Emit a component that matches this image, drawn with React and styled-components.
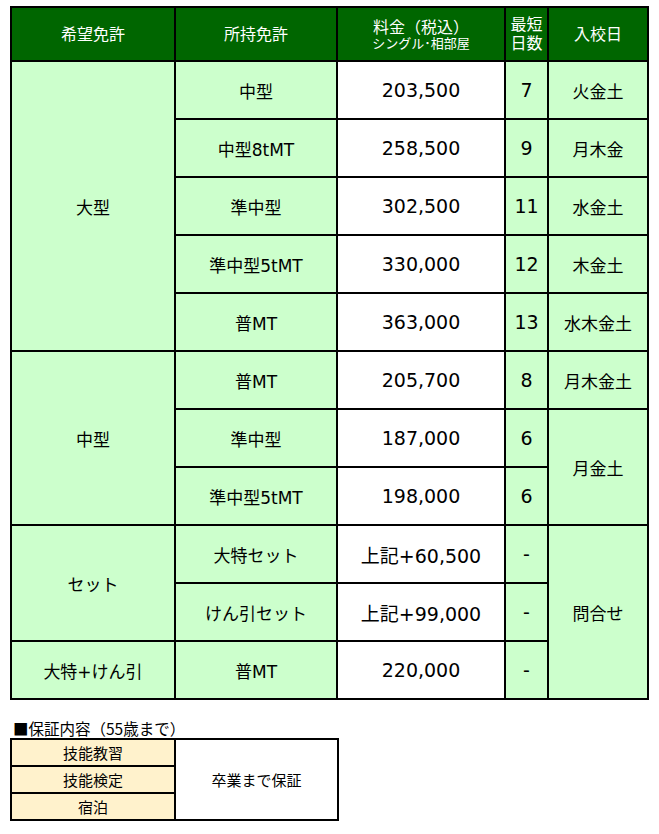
import React from 'react';
import styled, { createGlobalStyle } from 'styled-components';

const GlobalStyle = createGlobalStyle`
  html, body {
    margin: 0;
    padding: 0;
    background: #fff;
  }
  body {
    font-family: "DejaVu Sans", "Noto Sans CJK JP", sans-serif;
    color: #000;
  }
`;

const Page = styled.div`
  padding: 6px 0 0 10px;
  width: 640px;
`;

const PriceTable = styled.table`
  border-collapse: collapse;
  table-layout: fixed;
  width: 637px;
`;

const HeadCell = styled.th`
  background: #006600;
  color: #fff;
  font-weight: normal;
  font-size: 16px;
  line-height: 19px;
  height: 52px;
  padding: 0;
  border: 2px solid #000;
  text-align: center;
  vertical-align: middle;
`;

const SubHead = styled.span`
  display: block;
  font-size: 13px;
  line-height: 14px;
`;

const Row = styled.tr`
  height: 58px;
`;

const Cell = styled.td`
  background: ${({ $white }) => ($white ? '#fff' : '#ccffcc')};
  font-size: ${({ $num }) => ($num ? '19px' : '17px')};
  padding: 0;
  border: 2px solid #000;
  text-align: center;
  vertical-align: middle;
`;

const Note = styled.div`
  margin-top: 19px;
  padding-left: 3px;
  font-size: 15.5px;
  line-height: 19px;
  font-family: "Noto Sans CJK JP", sans-serif;
`;

const GuaranteeTable = styled.table`
  border-collapse: collapse;
  table-layout: fixed;
  width: 327px;
`;

const GCell = styled.td`
  background: ${({ $yellow }) => ($yellow ? '#fff2cc' : '#fff')};
  border: 2px solid #000;
  font-size: 15px;
  height: 25px;
  padding: 0;
  text-align: center;
  vertical-align: middle;
`;

const rows = [
  { want: '大型', span: 5, have: '中型', price: '203,500', days: '7', entry: '火金土' },
  { have: '中型8tMT', price: '258,500', days: '9', entry: '月木金' },
  { have: '準中型', price: '302,500', days: '11', entry: '水金土' },
  { have: '準中型5tMT', price: '330,000', days: '12', entry: '木金土' },
  { have: '普MT', price: '363,000', days: '13', entry: '水木金土' },
  { want: '中型', span: 3, have: '普MT', price: '205,700', days: '8', entry: '月木金土' },
  { have: '準中型', price: '187,000', days: '6', entry: '月金土', entrySpan: 2 },
  { have: '準中型5tMT', price: '198,000', days: '6', entry: null },
  { want: 'セット', span: 2, have: '大特セット', price: '上記+60,500', days: '-', entry: '問合せ', entrySpan: 3 },
  { have: 'けん引セット', price: '上記+99,000', days: '-', entry: null },
  { want: '大特+けん引', span: 1, have: '普MT', price: '220,000', days: '-', entry: null },
];

export default function App() {
  return (
    <Page>
      <GlobalStyle />
      <PriceTable>
        <colgroup>
          <col style={{ width: 164 }} />
          <col style={{ width: 162 }} />
          <col style={{ width: 168 }} />
          <col style={{ width: 43 }} />
          <col style={{ width: 100 }} />
        </colgroup>
        <thead>
          <tr>
            <HeadCell>希望免許</HeadCell>
            <HeadCell>所持免許</HeadCell>
            <HeadCell>
              料金（税込）
              <SubHead>シングル･相部屋</SubHead>
            </HeadCell>
            <HeadCell>最短<br />日数</HeadCell>
            <HeadCell>入校日</HeadCell>
          </tr>
        </thead>
        <tbody>
          {rows.map((r, i) => (
            <Row key={i}>
              {r.want && <Cell rowSpan={r.span}>{r.want}</Cell>}
              <Cell>{r.have}</Cell>
              <Cell $white $num>{r.price}</Cell>
              <Cell $num>{r.days}</Cell>
              {r.entry && <Cell rowSpan={r.entrySpan || 1}>{r.entry}</Cell>}
            </Row>
          ))}
        </tbody>
      </PriceTable>

      <Note>■保証内容（55歳まで）</Note>
      <GuaranteeTable>
        <colgroup>
          <col style={{ width: 164 }} />
          <col style={{ width: 163 }} />
        </colgroup>
        <tbody>
          <tr>
            <GCell $yellow>技能教習</GCell>
            <GCell rowSpan={3}>卒業まで保証</GCell>
          </tr>
          <tr>
            <GCell $yellow>技能検定</GCell>
          </tr>
          <tr>
            <GCell $yellow>宿泊</GCell>
          </tr>
        </tbody>
      </GuaranteeTable>
    </Page>
  );
}
